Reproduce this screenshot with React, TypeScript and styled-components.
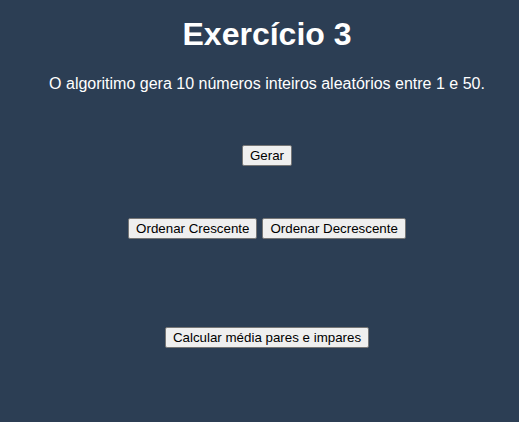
import React from "react";
import styled, { createGlobalStyle } from "styled-components";

const GlobalStyle = createGlobalStyle`
  html, body {
    margin: 0;
    padding: 0;
    background: #2c3e54;
  }
  body {
    font-family: "Liberation Sans", Arial, sans-serif;
    color: #ffffff;
  }
`;

const Page = styled.main`
  min-height: 422px;
  display: flex;
  flex-direction: column;
  align-items: center;
  padding: 16px 0 0 15px;
  box-sizing: border-box;
  text-align: center;
`;

const Title = styled.h1`
  margin: 0 0 22px;
  font-size: 32px;
  font-weight: bold;
  line-height: 37px;
`;

const Description = styled.p`
  margin: 0;
  font-size: 16px;
  line-height: 18px;
`;

const ButtonRow = styled.div<{ $space: number }>`
  display: flex;
  justify-content: center;
  gap: 5px;
  margin-top: ${(p) => p.$space}px;
`;

const Button = styled.button`
  height: 21px;
  padding: 1px 7px;
  font-family: "Liberation Sans", Arial, sans-serif;
  font-size: 13.33px;
  line-height: 17px;
  color: #000000;
  background: #efefef;
  border: 1px solid #767676;
  border-radius: 2px;
  box-sizing: border-box;
  cursor: pointer;
`;

export default function App() {
  return (
    <>
      <GlobalStyle />
      <Page>
        <Title>Exercício 3</Title>
        <Description>
          O algoritimo gera 10 números inteiros aleatórios entre 1 e 50.
        </Description>
        <ButtonRow $space={52}>
          <Button>Gerar</Button>
        </ButtonRow>
        <ButtonRow $space={52}>
          <Button>Ordenar Crescente</Button>
          <Button>Ordenar Decrescente</Button>
        </ButtonRow>
        <ButtonRow $space={88}>
          <Button>Calcular média pares e impares</Button>
        </ButtonRow>
      </Page>
    </>
  );
}
